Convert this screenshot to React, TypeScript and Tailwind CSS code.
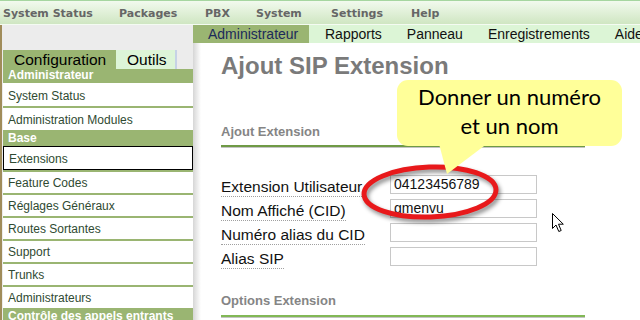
const topMenu = [
  { label: 'System Status', w: 'w-[116px]' },
  { label: 'Packages', w: 'w-[86px]' },
  { label: 'PBX', w: 'w-[51px]' },
  { label: 'System', w: 'w-[75px]' },
  { label: 'Settings', w: 'w-[80px]' },
  { label: 'Help', w: 'w-[60px]' },
]

const subMenu = ['Rapports', 'Panneau', 'Enregistrements', 'Aide']

type Item = { label: string; header?: boolean; h: string; active?: boolean; sep?: boolean }

const sideItems: Item[] = [
  { label: 'Administrateur', header: true, h: 'h-[14px]' },
  { label: 'System Status', h: 'h-[23px]', sep: true },
  { label: 'Administration Modules', h: 'h-[22px]' },
  { label: 'Base', header: true, h: 'h-[16px]' },
  { label: 'Extensions', h: 'h-[24px]', active: true, sep: true },
  { label: 'Feature Codes', h: 'h-[21px]', sep: true },
  { label: 'Réglages Généraux', h: 'h-[21px]', sep: true },
  { label: 'Routes Sortantes', h: 'h-[21px]', sep: true },
  { label: 'Support', h: 'h-[21px]', sep: true },
  { label: 'Trunks', h: 'h-[21px]', sep: true },
  { label: 'Administrateurs', h: 'h-[21px]' },
  { label: 'Contrôle des appels entrants', header: true, h: 'h-[16px]' },
]

const fields = [
  { label: 'Extension Utilisateur', value: '04123456789' },
  { label: 'Nom Affiché (CID)', value: 'gmenvu' },
  { label: 'Numéro alias du CID', value: '' },
  { label: 'Alias SIP', value: '' },
]

function SideRow({ item }: { item: Item }) {
  if (item.header) {
    return (
      <div className={`${item.h} flex items-end pb-px pl-[5px] bg-[#9ab572] text-white font-bold text-[12px] leading-[14px] whitespace-nowrap`}>
        {item.label}
      </div>
    )
  }
  return (
    <div className={item.sep ? 'border-b-2 border-[#9ab572]' : ''}>
      <div
        className={`${item.h} flex items-end pb-[3px] pl-[5px] bg-white text-[#2f4a32] text-[12px] leading-[14px] ${
          item.active ? 'border border-black pl-[4px]' : ''
        }`}
      >
        {item.label}
      </div>
    </div>
  )
}

export default function App() {
  return (
    <div className="relative w-[640px] h-[320px] overflow-hidden bg-white font-['Liberation_Sans',Arial,sans-serif]">
      {/* top menu */}
      <div className="h-[24px] border-t border-[#a6d6a0] bg-gradient-to-b from-[#f2faee] to-[#cfe6c2] flex items-center pl-[3px] pt-[2px]">
        {topMenu.map((m) => (
          <span
            key={m.label}
            className={`${m.w} font-['DejaVu_Sans',Verdana,sans-serif] font-bold text-[11px] leading-[13px] text-[#666]`}
          >
            {m.label}
          </span>
        ))}
      </div>
      <div className="h-px bg-[#f4fbf2]" />

      <div className="flex h-[295px]">
        {/* sidebar */}
        <div className="w-[193px] shrink-0 border-l-2 border-[#a08c5a] bg-[#ececec] pt-[25px] pl-px">
          <div className="flex h-[19px] text-[15.5px] leading-[19px] text-black">
            <div className="w-[113px] bg-[#9ab572] pl-[11px]">Configuration</div>
            <div className="w-[61px] bg-[#ddf5d8] pl-[11px] border-r-2 border-[#c6d2e6]">Outils</div>
          </div>
          {sideItems.map((it) => (
            <SideRow key={it.label} item={it} />
          ))}
        </div>

        {/* main */}
        <div className="flex-1 flex flex-col">
          <div className="h-[18px] bg-[#dcf5d6] flex items-stretch text-[14px] leading-[18px] text-[#111] whitespace-nowrap">
            <div className="w-[116px] bg-[#9ab572] pl-[15px] text-[#1c2a5a]">Administrateur</div>
            <div className="ml-[16px] flex gap-[25px]">
              {subMenu.map((s) => (
                <span key={s}>{s}</span>
              ))}
            </div>
          </div>
          <div className="flex-1 bg-[linear-gradient(to_right,#d6d6d6,#ffffff_8px)] pl-[28px] pr-[58px]">
            <h1 className="mt-[11px] text-[24px] leading-[24px] font-bold text-[#7a7a7a]">Ajout SIP Extension</h1>
            <div className="mt-[47px] text-[13px] leading-[13px] font-bold text-[#858585]">Ajout Extension</div>
            <div className="mt-[7px] h-[2px] bg-[#6f9a45]" />
            <div className="h-px bg-[#c4c4c4]" />

            <div className="mt-[25px]">
              {fields.map((f) => (
                <div key={f.label} className="flex items-start h-[24px]">
                  <div className="w-[169px] pt-[2px]">
                    <span className="inline-block text-[15.5px] leading-[19px] text-[#111] border-b border-dotted border-[#a0a0a0] whitespace-nowrap">
                      {f.label}
                    </span>
                  </div>
                  <div className="mt-[2px] w-[147px] h-[19px] border border-[#c8c8c8] bg-white pl-[3px] text-[14px] leading-[17px] text-[#111]">
                    {f.value}
                  </div>
                </div>
              ))}
            </div>

            <div className="mt-[25px] text-[13px] leading-[13px] font-bold text-[#858585]">Options Extension</div>
            <div className="mt-[8px] h-[2px] bg-[#82b856]" />
            <div className="h-px bg-[#c4c4c4]" />
          </div>
        </div>
      </div>

      {/* red circle annotation */}
      <svg className="absolute left-[355px] top-[160px] drop-shadow-[2px_3px_2px_rgba(0,0,0,0.45)]" width="160" height="70" viewBox="0 0 160 70">
        <ellipse cx="75" cy="32" rx="66" ry="25" fill="none" stroke="#e8191b" strokeWidth="5" transform="rotate(-2 75 32)" />
      </svg>

      {/* callout */}
      <svg className="absolute left-[430px] top-[140px]" width="70" height="40" viewBox="0 0 70 40">
        <polygon points="8,0 17,34 62,0" fill="#ffff99" />
      </svg>
      <div className="absolute left-[397px] top-[80px] w-[225px] h-[66px] rounded-[11px] bg-[#ffff99] flex flex-col items-center pt-[2px] font-['Lato','Noto_Sans',sans-serif] text-[22px] leading-[29px] text-black">
        <span>Donner un numéro</span>
        <span>et un nom</span>
      </div>

      {/* mouse cursor */}
      <svg className="absolute left-[552px] top-[213px]" width="13" height="20" viewBox="0 0 13 20">
        <path d="M0.5 0.5 L0.5 15.5 L4 12 L6.8 18.5 L9.2 17.5 L6.5 11.2 L11.3 11.2 Z" fill="#fff" stroke="#000" strokeWidth="1" strokeLinejoin="miter" />
      </svg>
    </div>
  )
}
